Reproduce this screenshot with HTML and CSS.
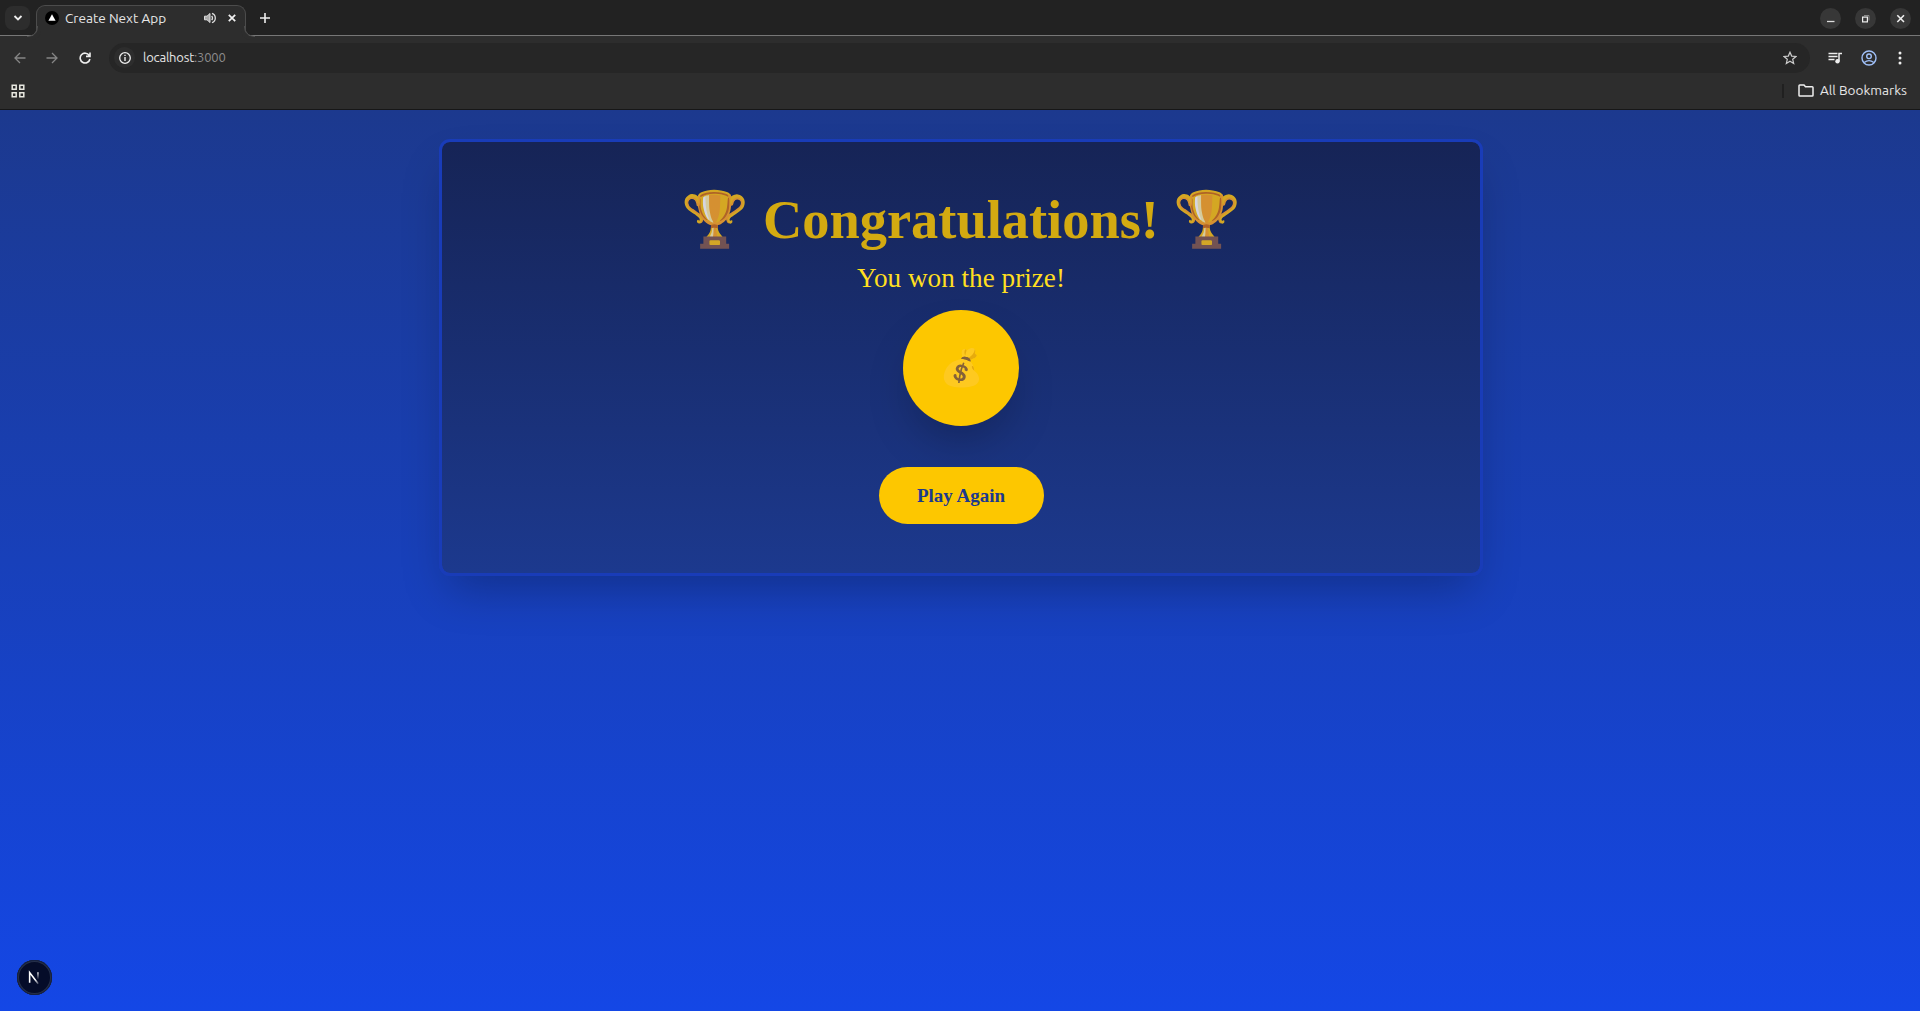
FILE: index.html
```html
<!DOCTYPE html>
<html lang="en">
<head>
<meta charset="utf-8">
<title>Create Next App</title>
<link rel="stylesheet" href="styles.css">
</head>
<body>
<header class="browser">
  <div class="tabstrip">
    <button class="tab-search" aria-label="Search tabs"><svg width="10" height="8" viewBox="0 0 10 8"><path d="M1.500 2 5 5.500 8.500 2" fill="none" stroke="#eee" stroke-width="1.800"/></svg></button>
    <div class="tab">
      <svg class="favicon" width="14" height="14" viewBox="0 0 14 14"><circle cx="7" cy="7" r="7" fill="#000"/><path d="M7 3.200 10.600 9.800H3.400Z" fill="#fff"/></svg>
      <span class="tab-title">Create Next App</span>
      <svg class="audio" width="12" height="12" viewBox="0 0 12 12"><path d="M.5 4.200H3L6 1.500V10.500L3 7.800H.5Z" fill="#aaa" stroke="#ddd"/><path d="M7.700 3.800Q9.300 6 7.700 8.200M8 1.300Q11.300 2.500 11.300 6T8 10.700" fill="none" stroke="#ddd" stroke-width="1.300"/></svg>
      <svg class="close" width="8" height="8" viewBox="0 0 8 8"><path d="M.8.8 7.200 7.200M7.200.8.8 7.200" stroke="#f2f2f2" stroke-width="1.700"/></svg>
    </div>
    <svg class="new-tab" width="10" height="10" viewBox="0 0 10 10"><path d="M5 0V10M0 5H10" stroke="#eee" stroke-width="1.600"/></svg>
    <div class="window-controls">
      <span class="control"><svg width="21" height="21" viewBox="0 0 21 21"><path d="M7 13.500H14.500" stroke="#ddd" stroke-width="1.300"/></svg></span>
      <span class="control"><svg width="21" height="21" viewBox="0 0 21 21" fill="none"><path d="M9 7.500H14V12.500" stroke="#888"/><rect x="7.600" y="9.100" width="4.800" height="4.800" stroke="#eee" stroke-width="1.200"/></svg></span>
      <span class="control"><svg width="21" height="21" viewBox="0 0 21 21"><path d="M7.300 7.300 14 14M14 7.300 7.300 14" stroke="#eee" stroke-width="1.600"/></svg></span>
    </div>
  </div>
  <div class="toolbar">
    <svg width="12" height="12" viewBox="0 0 12 12" fill="none" stroke="#858585" stroke-width="1.300"><path d="M11.500 6H1.500M6 1 1 6 6 11"/></svg>
    <svg class="forward" width="12" height="12" viewBox="0 0 12 12" fill="none" stroke="#858585" stroke-width="1.300"><path d="M.5 6H10.500M6 1 11 6 6 11"/></svg>
    <svg class="reload" width="12" height="12" viewBox="0 0 12 12" fill="none" stroke="#eee" stroke-width="1.600"><path d="M10.200 3.400A4.900 4.900 0 1 0 10.900 7M11 .5V4.400H7"/></svg>
    <div class="address">
      <span class="site-info"><svg width="12" height="12" viewBox="0 0 12 12"><circle cx="6" cy="6" r="5.300" fill="none" stroke="#eee" stroke-width="1.300"/><path d="M6 5V9M6 2.800V4" stroke="#eee" stroke-width="1.400"/></svg></span>
      <span class="url">localhost<span class="port">:3000</span></span>
      <svg class="star" width="14" height="14" viewBox="0 0 14 14"><path d="M7 1.200 8.700 5.100 13 5.500 9.700 8.300 10.700 12.500 7 10.300 3.300 12.500 4.300 8.300 1 5.500 5.300 5.100Z" fill="none" stroke="#ccc" stroke-width="1.200"/></svg>
    </div>
    <svg class="media" width="15" height="12" viewBox="0 0 15 12"><path d="M.5 1.500H9.500M.5 4.500H9.500M.5 7.500H6.500M11 9V1.500H14" fill="none" stroke="#eee" stroke-width="1.500"/><circle cx="9.500" cy="9.200" r="2.200" fill="#eee"/></svg>
    <svg class="profile" width="16" height="16" viewBox="0 0 16 16" fill="none" stroke="#a0c0f8" stroke-width="1.400"><circle cx="8" cy="8" r="7"/><circle cx="8" cy="6.300" r="2.300"/><path d="M3.200 12.500Q8 8.800 12.800 12.500"/></svg>
    <svg class="menu" width="4" height="14" viewBox="0 0 4 14" fill="#eee"><circle cx="2" cy="2" r="1.500"/><circle cx="2" cy="7" r="1.500"/><circle cx="2" cy="12" r="1.500"/></svg>
  </div>
  <div class="bookmarks">
    <svg width="14" height="14" viewBox="0 0 14 14" fill="none" stroke="#e8e8e0" stroke-width="1.500"><path d="M1.200 1.200H5.200V5.200H1.200ZM8.800 1.200H12.800V5.200H8.800ZM1.200 8.800H5.200V12.800H1.200ZM8.800 8.800H12.800V12.800H8.800Z"/></svg>
    <span class="divider"></span>
    <svg width="16" height="13" viewBox="0 0 16 13"><path d="M1 11.200V1.800Q1 1 1.800 1H6L7.500 2.800H14.200Q15 2.800 15 3.600V11.200Q15 12 14.200 12H1.800Q1 12 1 11.200Z" fill="none" stroke="#eee" stroke-width="1.500"/></svg>
    <span class="bookmark-label">All Bookmarks</span>
  </div>
</header>
<main class="page">
  <section class="card">
    <h1 class="title">🏆 Congratulations! 🏆</h1>
    <p class="subtitle">You won the prize!</p>
    <div class="coin"><span class="money">💰</span></div>
    <button class="play">Play Again</button>
  </section>
  <div class="dev-badge"><svg width="35" height="35" viewBox="0 0 36 36"><defs><linearGradient id="diag" x1="14" y1="13" x2="23" y2="24" gradientUnits="userSpaceOnUse"><stop offset=".6" stop-color="#fff"/><stop offset="1" stop-color="#fff" stop-opacity=".2"/></linearGradient><linearGradient id="stem" x1="0" y1="12" x2="0" y2="20" gradientUnits="userSpaceOnUse"><stop stop-color="#fff"/><stop offset="1" stop-color="#fff" stop-opacity="0"/></linearGradient></defs><path d="M13 23.500V13L21.800 24.500" fill="none" stroke="url(#diag)" stroke-width="1.600"/><path d="M20.800 12.500H22.300V20H20.800Z" fill="url(#stem)"/></svg></div>
</main>
</body>
</html>
```
FILE: styles.css
```css
* { box-sizing: border-box; }
body { margin: 0; height: 1011px; display: flex; flex-direction: column; overflow: hidden; font-family: "Liberation Serif", serif; }
svg { display: block; flex: none; }
button { border: 0; padding: 0; font: inherit; }

.browser { height: 110px; flex: none; background: #2d2d2d; border-bottom: 1px solid #171717; font-family: "Ubuntu", "Noto Sans", sans-serif; font-size: 13.6px; color: #e6e6e6; }
.tabstrip { height: 37px; display: flex; align-items: center; padding: 0 9px 1px 5px; background: linear-gradient(#222 35px, #777 35px, #777 36px, #2d2d2d 36px); }
.tab-search { width: 25px; height: 24px; border-radius: 8px; background: #2d2d2d; display: grid; place-items: center; }
.tab { position: relative; width: 210px; height: 32px; margin: 5px 0 0 6px; padding: 0 9px 6px 8px; display: flex; align-items: center; background: #2d2d2d; border: 1px solid #4c4c4c; border-bottom: 0; border-radius: 9px 9px 0 0; }
.tab::before, .tab::after { content: ""; position: absolute; bottom: 0; width: 10px; height: 10px; border-bottom: 1px solid #4c4c4c; }
.tab::before { left: -10px; border-right: 1px solid #4c4c4c; border-bottom-right-radius: 10px; box-shadow: 4px 4px 0 -1px #2d2d2d; }
.tab::after { right: -10px; border-left: 1px solid #4c4c4c; border-bottom-left-radius: 10px; box-shadow: -4px 4px 0 -1px #2d2d2d; }
.tab-title { margin-left: 6px; width: 103px; white-space: nowrap; }
.audio { margin-left: 36px; }
.close { margin-left: auto; }
.new-tab { margin-left: 14px; }
.window-controls { margin-left: auto; display: flex; gap: 14px; }
.control { width: 21px; height: 21px; border-radius: 50%; background: #373737; }
.toolbar { height: 41px; display: flex; align-items: center; padding: 0 18px 0 14px; }
.forward { margin-left: 20px; }
.reload { margin-left: 21px; }
.address { flex: 1; height: 30px; margin-left: 18px; padding: 0 13px 0 5px; border-radius: 15px; background: #262626; display: flex; align-items: center; font-size: 13px; }
.site-info { width: 21px; height: 21px; border-radius: 50%; background: #2d2d2d; display: grid; place-items: center; }
.url { margin: 0 0 1px 8px; letter-spacing: -.2px; }
.port { color: #8c8c8c; }
.star { margin-left: auto; }
.media { margin-left: 18px; }
.profile { margin-left: 18px; }
.menu { margin-left: 21px; }
.bookmarks { height: 31px; display: flex; align-items: center; padding: 0 13px 6px 11px; }
.divider { width: 2px; height: 14px; margin: 0 14px 0 auto; background: #202020; }
.bookmark-label { margin: 0 0 1px 6px; }

.page { position: relative; flex: 1; display: flex; justify-content: center; align-items: flex-start; padding-top: 29px; background: linear-gradient(#1c398e, #1447e6); }
.card { width: 1044px; height: 437px; margin-left: 2px; padding-top: 51px; display: flex; flex-direction: column; align-items: center; border: 3px solid #193cb8; border-radius: 11px; background: linear-gradient(#162456, #1c398e) padding-box; box-shadow: 0 22.600px 45.300px -10.900px rgb(0 0 0 / .25); }
.title { margin: 0; font-size: 54.400px; line-height: 54px; font-weight: 700; color: #fdc700; opacity: .82; white-space: nowrap; }
.subtitle { margin: 15px 0 0; font-size: 27.200px; line-height: 32px; color: #ffdf20; }
.coin { width: 116px; height: 116px; margin-top: 16px; border-radius: 50%; background: #fdc700; display: grid; place-items: center; box-shadow: 0 22.600px 45.300px -10.900px rgb(0 0 0 / .25); }
.money { font-size: 36px; line-height: 40px; opacity: .82; }
.play { width: 165px; height: 57px; margin-top: 41px; border-radius: 29px; background: #fdc700; color: #1c398e; font-size: 19px; font-weight: 700; }
.dev-badge { position: absolute; left: 17px; bottom: 16px; width: 35px; height: 35px; border-radius: 50%; background: #050c29; box-shadow: inset 0 0 0 1px #15203f, inset 0 0 0 2px #26304a; }
```
